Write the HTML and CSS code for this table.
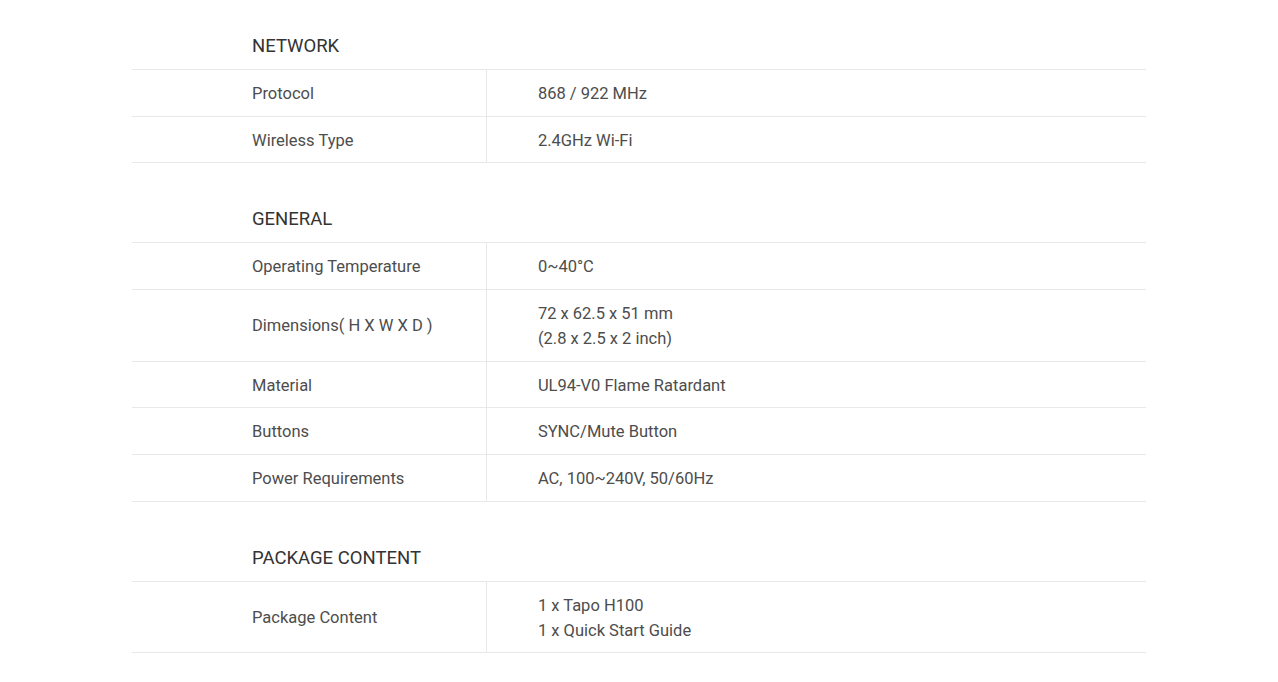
FILE: index.html
```html
<!DOCTYPE html>
<html>
<head>
<meta charset="utf-8">
<link rel="stylesheet" href="styles.css">
</head>
<body>
<div class="specs">
  <section class="group">
    <h3 class="group-title">NETWORK</h3>
    <div class="row"><div class="label">Protocol</div><div class="value">868 / 922 MHz</div></div>
    <div class="row"><div class="label">Wireless Type</div><div class="value">2.4GHz Wi-Fi</div></div>
  </section>
  <section class="group">
    <h3 class="group-title">GENERAL</h3>
    <div class="row"><div class="label">Operating Temperature</div><div class="value">0~40°C</div></div>
    <div class="row"><div class="label">Dimensions( H X W X D )</div><div class="value">72 x 62.5 x 51 mm<br>(2.8 x 2.5 x 2 inch)</div></div>
    <div class="row"><div class="label">Material</div><div class="value">UL94-V0 Flame Ratardant</div></div>
    <div class="row"><div class="label">Buttons</div><div class="value">SYNC/Mute Button</div></div>
    <div class="row"><div class="label">Power Requirements</div><div class="value">AC, 100~240V, 50/60Hz</div></div>
  </section>
  <section class="group">
    <h3 class="group-title">PACKAGE CONTENT</h3>
    <div class="row"><div class="label">Package Content</div><div class="value">1 x Tapo H100<br>1 x Quick Start Guide</div></div>
  </section>
</div>
</body>
</html>
```

FILE: styles.css
```css
html, body {
  margin: 0;
  padding: 0;
  background: #fff;
}
body {
  font-family: Roboto, "Liberation Sans", sans-serif;
  color: #4d4d4d;
}
.specs {
  width: 1014px;
  margin: 0 auto;
  padding-top: 19px;
  padding-bottom: 28px;
}
.group + .group {
  margin-top: 29px;
}
.group-title {
  margin: 0;
  padding: 14px 0 10px 120px;
  font-size: 18.5px;
  line-height: 26px;
  font-weight: 400;
  color: #333;
  border-bottom: 1px solid #e8e8e8;
}
.row {
  display: grid;
  grid-template-columns: 35% 1fr;
  border-bottom: 1px solid #e8e8e8;
  font-size: 16.5px;
  line-height: 25px;
}
.label {
  display: flex;
  align-items: center;
  padding: 11px 0 9.67px 120px;
  border-right: 1px solid #e8e8e8;
}
.value {
  padding: 11px 0 9.67px 51px;
}
```
